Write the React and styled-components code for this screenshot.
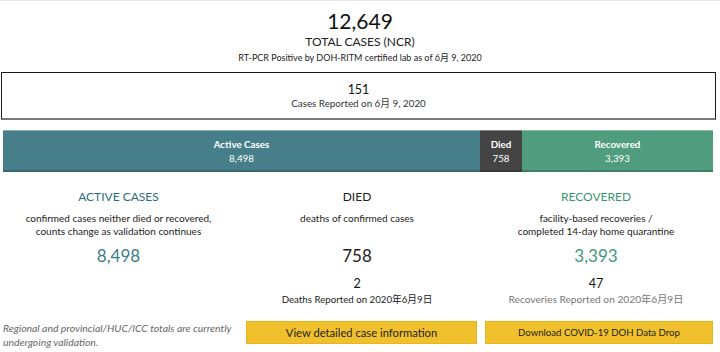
import React from 'react';
import styled, { createGlobalStyle } from 'styled-components';

const GlobalStyle = createGlobalStyle`
  html, body {
    margin: 0;
    padding: 0;
    background: #ffffff;
  }
  body {
    font-family: Lato, "Noto Sans CJK SC", sans-serif;
    color: #333333;
  }
`;

const Page = styled.div`
  width: 720px;
  height: 352px;
  overflow: hidden;
  box-sizing: border-box;
  border-top: 1px solid #e6e6e6;
  display: flex;
  flex-direction: column;
`;

const Header = styled.div`
  display: flex;
  flex-direction: column;
  align-items: center;
  padding-top: 8px;
  height: 63px;
`;

const Total = styled.div`
  font-size: 21px;
  line-height: 24px;
  color: #111;
`;

const TotalLabel = styled.div`
  font-size: 12px;
  line-height: 16px;
  margin-top: 1px;
  color: #222;
`;

const SubNote = styled.div`
  font-size: 9px;
  line-height: 12px;
  margin-top: 2px;
  color: #222;
`;

const ReportBox = styled.div`
  margin: 0 4px 0 1px;
  height: 45px;
  border: 1px solid #1a1a1a;
  border-bottom: 2px solid #7a7a7a;
  display: flex;
  flex-direction: column;
  align-items: center;
  justify-content: center;
`;

const ReportNumber = styled.div`
  font-size: 12.5px;
  line-height: 15px;
  color: #111;
`;

const ReportText = styled.div`
  font-size: 9.8px;
  line-height: 13px;
  color: #333;
`;

const Bar = styled.div`
  margin: 10px 7px 0 3px;
  height: 42px;
  display: flex;
`;

const Segment = styled.div`
  flex: ${({ grow }) => grow};
  background: ${({ bg }) => bg};
  border-top: 1px solid rgba(255, 255, 255, 0.35);
  border-bottom: 2px solid rgba(0, 0, 0, 0.18);
  display: flex;
  flex-direction: column;
  align-items: center;
  justify-content: center;
  color: #ffffff;
  font-size: 9.8px;
  line-height: 14px;
  box-sizing: border-box;
`;

const SegTitle = styled.div`
  font-weight: 700;
`;

const Columns = styled.div`
  display: grid;
  grid-template-columns: 237px 240px 238px;
  margin-top: 17px;
`;

const Column = styled.div`
  display: flex;
  flex-direction: column;
  align-items: center;
  text-align: center;
`;

const ColTitle = styled.div`
  font-size: 12px;
  line-height: 16px;
  color: ${({ color }) => color};
`;

const ColDesc = styled.div`
  font-size: 10px;
  line-height: 13px;
  margin-top: 7px;
  height: 26px;
  color: #222;
`;

const ColValue = styled.div`
  font-size: 17px;
  line-height: 20px;
  margin-top: 8px;
  color: ${({ color }) => color};
`;

const DayValue = styled.div`
  font-size: 12.5px;
  line-height: 16px;
  margin-top: 10px;
  color: #111;
`;

const DayText = styled.div`
  font-size: ${({ size }) => size}px;
  line-height: 14px;
  color: ${({ color }) => color};
`;

const Footer = styled.div`
  margin-top: auto;
  margin-bottom: 7px;
  display: grid;
  grid-template-columns: 246px 231px 236px;
  align-items: start;
`;

const Note = styled.div`
  font-size: 10.4px;
  line-height: 14px;
  font-style: italic;
  color: #666;
  padding-left: 3px;
  margin-bottom: -4px;
`;

const Button = styled.div`
  height: 23px;
  margin-left: ${({ offset }) => offset}px;
  box-sizing: border-box;
  background: #f0c12c;
  border: 1px solid #e6b61f;
  display: flex;
  align-items: center;
  justify-content: center;
  font-size: ${({ size }) => size}px;
  color: #222;
`;

export default function App() {
  return (
    <Page>
      <GlobalStyle />
      <Header>
        <Total>12,649</Total>
        <TotalLabel>TOTAL CASES (NCR)</TotalLabel>
        <SubNote>RT-PCR Positive by DOH-RITM certified lab as of 6月 9, 2020</SubNote>
      </Header>
      <ReportBox>
        <ReportNumber>151</ReportNumber>
        <ReportText>Cases Reported on 6月 9, 2020</ReportText>
      </ReportBox>
      <Bar>
        <Segment grow={477} bg="#467f8a">
          <SegTitle>Active Cases</SegTitle>
          <div>8,498</div>
        </Segment>
        <Segment grow={42} bg="#444444">
          <SegTitle>Died</SegTitle>
          <div>758</div>
        </Segment>
        <Segment grow={191} bg="#4f9c7e">
          <SegTitle>Recovered</SegTitle>
          <div>3,393</div>
        </Segment>
      </Bar>
      <Columns>
        <Column>
          <ColTitle color="#2e6e7c">ACTIVE CASES</ColTitle>
          <ColDesc>
            confirmed cases neither died or recovered,
            <br />
            counts change as validation continues
          </ColDesc>
          <ColValue color="#3c7e8b">8,498</ColValue>
        </Column>
        <Column>
          <ColTitle color="#222">DIED</ColTitle>
          <ColDesc>deaths of confirmed cases</ColDesc>
          <ColValue color="#222">758</ColValue>
          <DayValue>2</DayValue>
          <DayText color="#222" size={9.7}>Deaths Reported on 2020年6月9日</DayText>
        </Column>
        <Column>
          <ColTitle color="#3a9670">RECOVERED</ColTitle>
          <ColDesc>
            facility-based recoveries /
            <br />
            completed 14-day home quarantine
          </ColDesc>
          <ColValue color="#3e9a74">3,393</ColValue>
          <DayValue>47</DayValue>
          <DayText color="#777" size={10.2}>Recoveries Reported on 2020年6月9日</DayText>
        </Column>
      </Columns>
      <Footer>
        <Note>
          Regional and provincial/HUC/ICC totals are currently
          <br />
          undergoing validation.
        </Note>
        <Button offset={0} size={11.2}>View detailed case information</Button>
        <Button offset={8} size={9.6}>Download COVID-19 DOH Data Drop</Button>
      </Footer>
    </Page>
  );
}
